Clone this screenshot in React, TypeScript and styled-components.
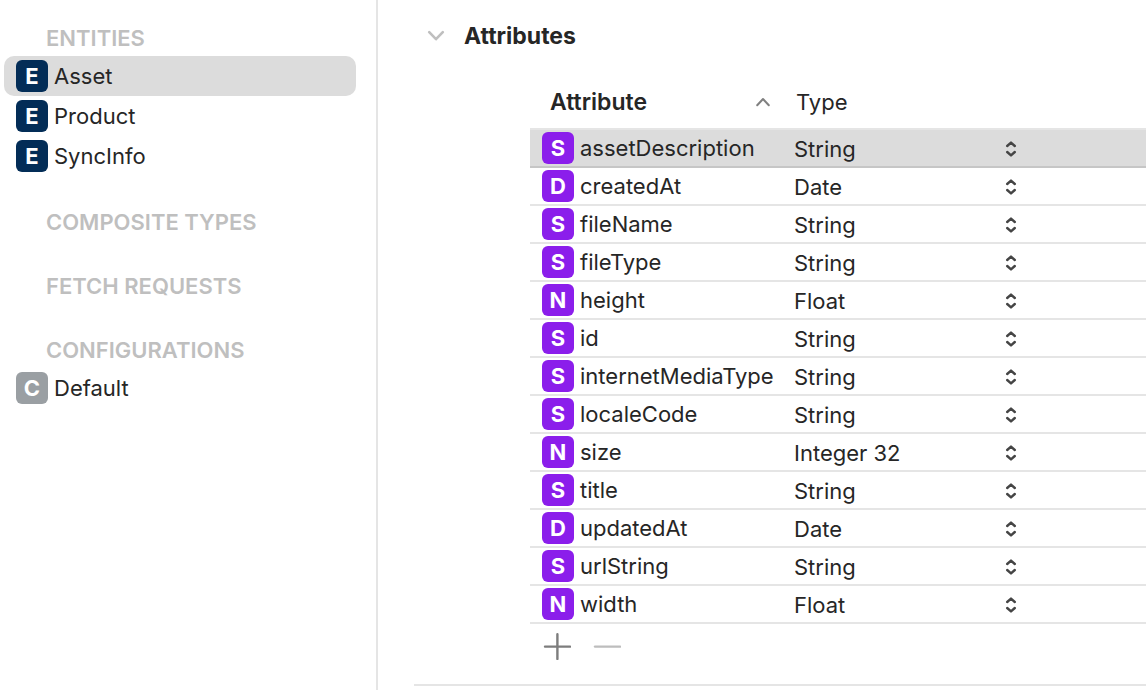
import React, { useState } from "react";
import styled, { createGlobalStyle } from "styled-components";

const GlobalStyle = createGlobalStyle`
  *, *::before, *::after { box-sizing: border-box; }
  body {
    margin: 0;
    background: #ffffff;
    color: #262626;
    font-family: Inter, "Liberation Sans", sans-serif;
    font-size: 22px;
    line-height: 28px;
  }
  button, select { font: inherit; color: inherit; }
`;

const Layout = styled.div`
  display: flex;
  min-height: 100vh;
`;

const Sidebar = styled.nav`
  flex: 0 0 378px;
  display: flex;
  flex-direction: column;
  gap: 28px;
  padding: 20px 20px 20px 4px;
  border-right: 2px solid #e5e5e5;
`;

const SidebarHeading = styled.h2`
  margin: 0;
  padding: 4px 0 4px 42px;
  font-size: 22px;
  font-weight: 600;
  line-height: 28px;
  color: #bfbfbf;
`;

const SidebarList = styled.ul`
  margin: 0;
  padding: 0;
  list-style: none;
`;

const SidebarItem = styled.button<{ $selected: boolean }>`
  display: flex;
  align-items: center;
  gap: 6px;
  width: 100%;
  height: 40px;
  padding: 0 12px;
  border: 0;
  border-radius: 10px;
  background: ${(p) => (p.$selected ? "#dcdcdc" : "transparent")};
  text-align: left;
`;

const Badge = styled.span<{ $color: string }>`
  display: inline-flex;
  flex: none;
  align-items: center;
  justify-content: center;
  width: 32px;
  height: 32px;
  border-radius: 6px;
  background: ${(p) => p.$color};
  color: #ffffff;
  font-size: 22px;
  font-weight: 700;
`;

const Main = styled.main`
  flex: 1;
  min-width: 0;
  padding-left: 36px;
`;

const Section = styled.section`
  border-bottom: 2px solid #e5e5e5;
  padding-bottom: 24px;
`;

const SectionHeader = styled.h1`
  margin: 0;
  padding: 16px 0 0 12px;
  font-size: 23px;
  font-weight: 700;
  line-height: 28px;
`;

const Disclosure = styled.button`
  display: flex;
  align-items: center;
  gap: 18px;
  height: 40px;
  padding: 0;
  border: 0;
  background: none;
`;

const SectionBody = styled.div`
  padding: 20px 0 0 116px;
`;

const Table = styled.table`
  width: 100%;
  table-layout: fixed;
  border-collapse: separate;
  border-spacing: 0;
`;

const NameHeader = styled.th`
  width: 264px;
  height: 54px;
  padding: 0 24px 0 20px;
  border-bottom: 2px solid #e5e5e5;
`;

const SortButton = styled.button`
  display: flex;
  align-items: center;
  justify-content: space-between;
  width: 100%;
  padding: 0;
  border: 0;
  background: none;
  font-size: 23px;
  font-weight: 600;
`;

const TypeHeader = styled.th`
  padding: 0 0 0 2px;
  border-bottom: 2px solid #e5e5e5;
  font-weight: 400;
  text-align: left;
`;

const Row = styled.tr<{ $selected: boolean }>`
  background: ${(p) => (p.$selected ? "#dcdcdc" : "transparent")};
  & > td {
    height: 38px;
    padding: 0;
    border-bottom: 2px solid ${(p) => (p.$selected ? "#c6c6c6" : "#e5e5e5")};
  }
`;

const NameCell = styled.div`
  display: flex;
  align-items: center;
  gap: 6px;
  padding-left: 12px;
`;

const TypeField = styled.div`
  display: grid;
  grid-template-columns: 211px 12px;
  align-items: center;
  padding-top: 2px;
`;

const TypeSelect = styled.select`
  grid-area: 1 / 1 / 2 / 3;
  width: 100%;
  height: 28px;
  padding: 0;
  border: 0;
  appearance: none;
  background: transparent;
`;

const Stepper = styled.svg`
  grid-area: 1 / 2 / 2 / 3;
  pointer-events: none;
`;

const Actions = styled.div`
  display: flex;
  gap: 22px;
  padding: 8px 0 0 13px;
`;

const IconButton = styled.button`
  display: flex;
  padding: 0;
  border: 0;
  background: none;
  color: #7d7d7d;
  &:disabled { color: #bdbdbd; }
`;

const groups = [
  { title: "ENTITIES", letter: "E", color: "#032d57", items: ["Asset", "Product", "SyncInfo"] },
  { title: "COMPOSITE TYPES", letter: "T", color: "#9a9fa3", items: [] },
  { title: "FETCH REQUESTS", letter: "F", color: "#9a9fa3", items: [] },
  { title: "CONFIGURATIONS", letter: "C", color: "#9a9fa3", items: ["Default"] },
];

const attributes = [
  ["assetDescription", "String"],
  ["createdAt", "Date"],
  ["fileName", "String"],
  ["fileType", "String"],
  ["height", "Float"],
  ["id", "String"],
  ["internetMediaType", "String"],
  ["localeCode", "String"],
  ["size", "Integer 32"],
  ["title", "String"],
  ["updatedAt", "Date"],
  ["urlString", "String"],
  ["width", "Float"],
];

const badgeLetters: Record<string, string> = {
  String: "S",
  Date: "D",
  Float: "N",
  "Integer 32": "N",
};

export default function App() {
  const [entity, setEntity] = useState("Asset");
  const [selected, setSelected] = useState("assetDescription");
  const [open, setOpen] = useState(true);

  return (
    <>
      <GlobalStyle />
      <Layout>
        <Sidebar aria-label="Model">
          {groups.map((group) => (
            <div key={group.title}>
              <SidebarHeading>{group.title}</SidebarHeading>
              {group.items.length > 0 && (
                <SidebarList>
                  {group.items.map((item) => (
                    <li key={item}>
                      <SidebarItem $selected={item === entity} onClick={() => setEntity(item)}>
                        <Badge $color={group.color}>{group.letter}</Badge>
                        {item}
                      </SidebarItem>
                    </li>
                  ))}
                </SidebarList>
              )}
            </div>
          ))}
        </Sidebar>
        <Main>
          <Section>
            <SectionHeader>
              <Disclosure aria-expanded={open} onClick={() => setOpen(!open)}>
                <svg width="20" height="14" viewBox="0 0 20 14" fill="none" stroke="#bfbfbf" strokeWidth="2.6" strokeLinecap="round" strokeLinejoin="round" aria-hidden="true">
                  <path d="M3.2 3.2 10 10.2 16.8 3.2" />
                </svg>
                Attributes
              </Disclosure>
            </SectionHeader>
            {open && (
              <SectionBody>
                <Table>
                  <thead>
                    <tr>
                      <NameHeader aria-sort="ascending">
                        <SortButton>
                          Attribute
                          <svg width="14" height="10" viewBox="0 0 14 10" fill="none" stroke="#808080" strokeWidth="2" strokeLinecap="round" strokeLinejoin="round" aria-hidden="true">
                            <path d="M1.2 8.2 7 2 12.8 8.2" />
                          </svg>
                        </SortButton>
                      </NameHeader>
                      <TypeHeader>Type</TypeHeader>
                    </tr>
                  </thead>
                  <tbody>
                    {attributes.map(([name, type]) => (
                      <Row key={name} $selected={name === selected} onClick={() => setSelected(name)}>
                        <td>
                          <NameCell>
                            <Badge $color="#8b1eeb">{badgeLetters[type]}</Badge>
                            {name}
                          </NameCell>
                        </td>
                        <td>
                          <TypeField>
                            <TypeSelect aria-label={`Type of ${name}`} defaultValue={type}>
                              {Object.keys(badgeLetters).map((option) => (
                                <option key={option}>{option}</option>
                              ))}
                            </TypeSelect>
                            <Stepper width="12" height="16" viewBox="0 0 12 16" fill="none" stroke="#454545" strokeWidth="2.4" strokeLinecap="round" strokeLinejoin="round" aria-hidden="true">
                              <path d="M2.2 5 6 1.6 9.8 5M2.2 11 6 14.4 9.8 11" />
                            </Stepper>
                          </TypeField>
                        </td>
                      </Row>
                    ))}
                  </tbody>
                </Table>
                <Actions>
                  <IconButton aria-label="Add attribute">
                    <svg width="28" height="28" viewBox="0 0 28 28" fill="none" stroke="currentColor" strokeWidth="2.4" strokeLinecap="round">
                      <path d="M2 14.6H27M14.4 2.2V27" />
                    </svg>
                  </IconButton>
                  <IconButton aria-label="Remove attribute" disabled>
                    <svg width="28" height="28" viewBox="0 0 28 28" fill="none" stroke="currentColor" strokeWidth="2.4" strokeLinecap="round">
                      <path d="M2 14.6H27" />
                    </svg>
                  </IconButton>
                </Actions>
              </SectionBody>
            )}
          </Section>
        </Main>
      </Layout>
    </>
  );
}
